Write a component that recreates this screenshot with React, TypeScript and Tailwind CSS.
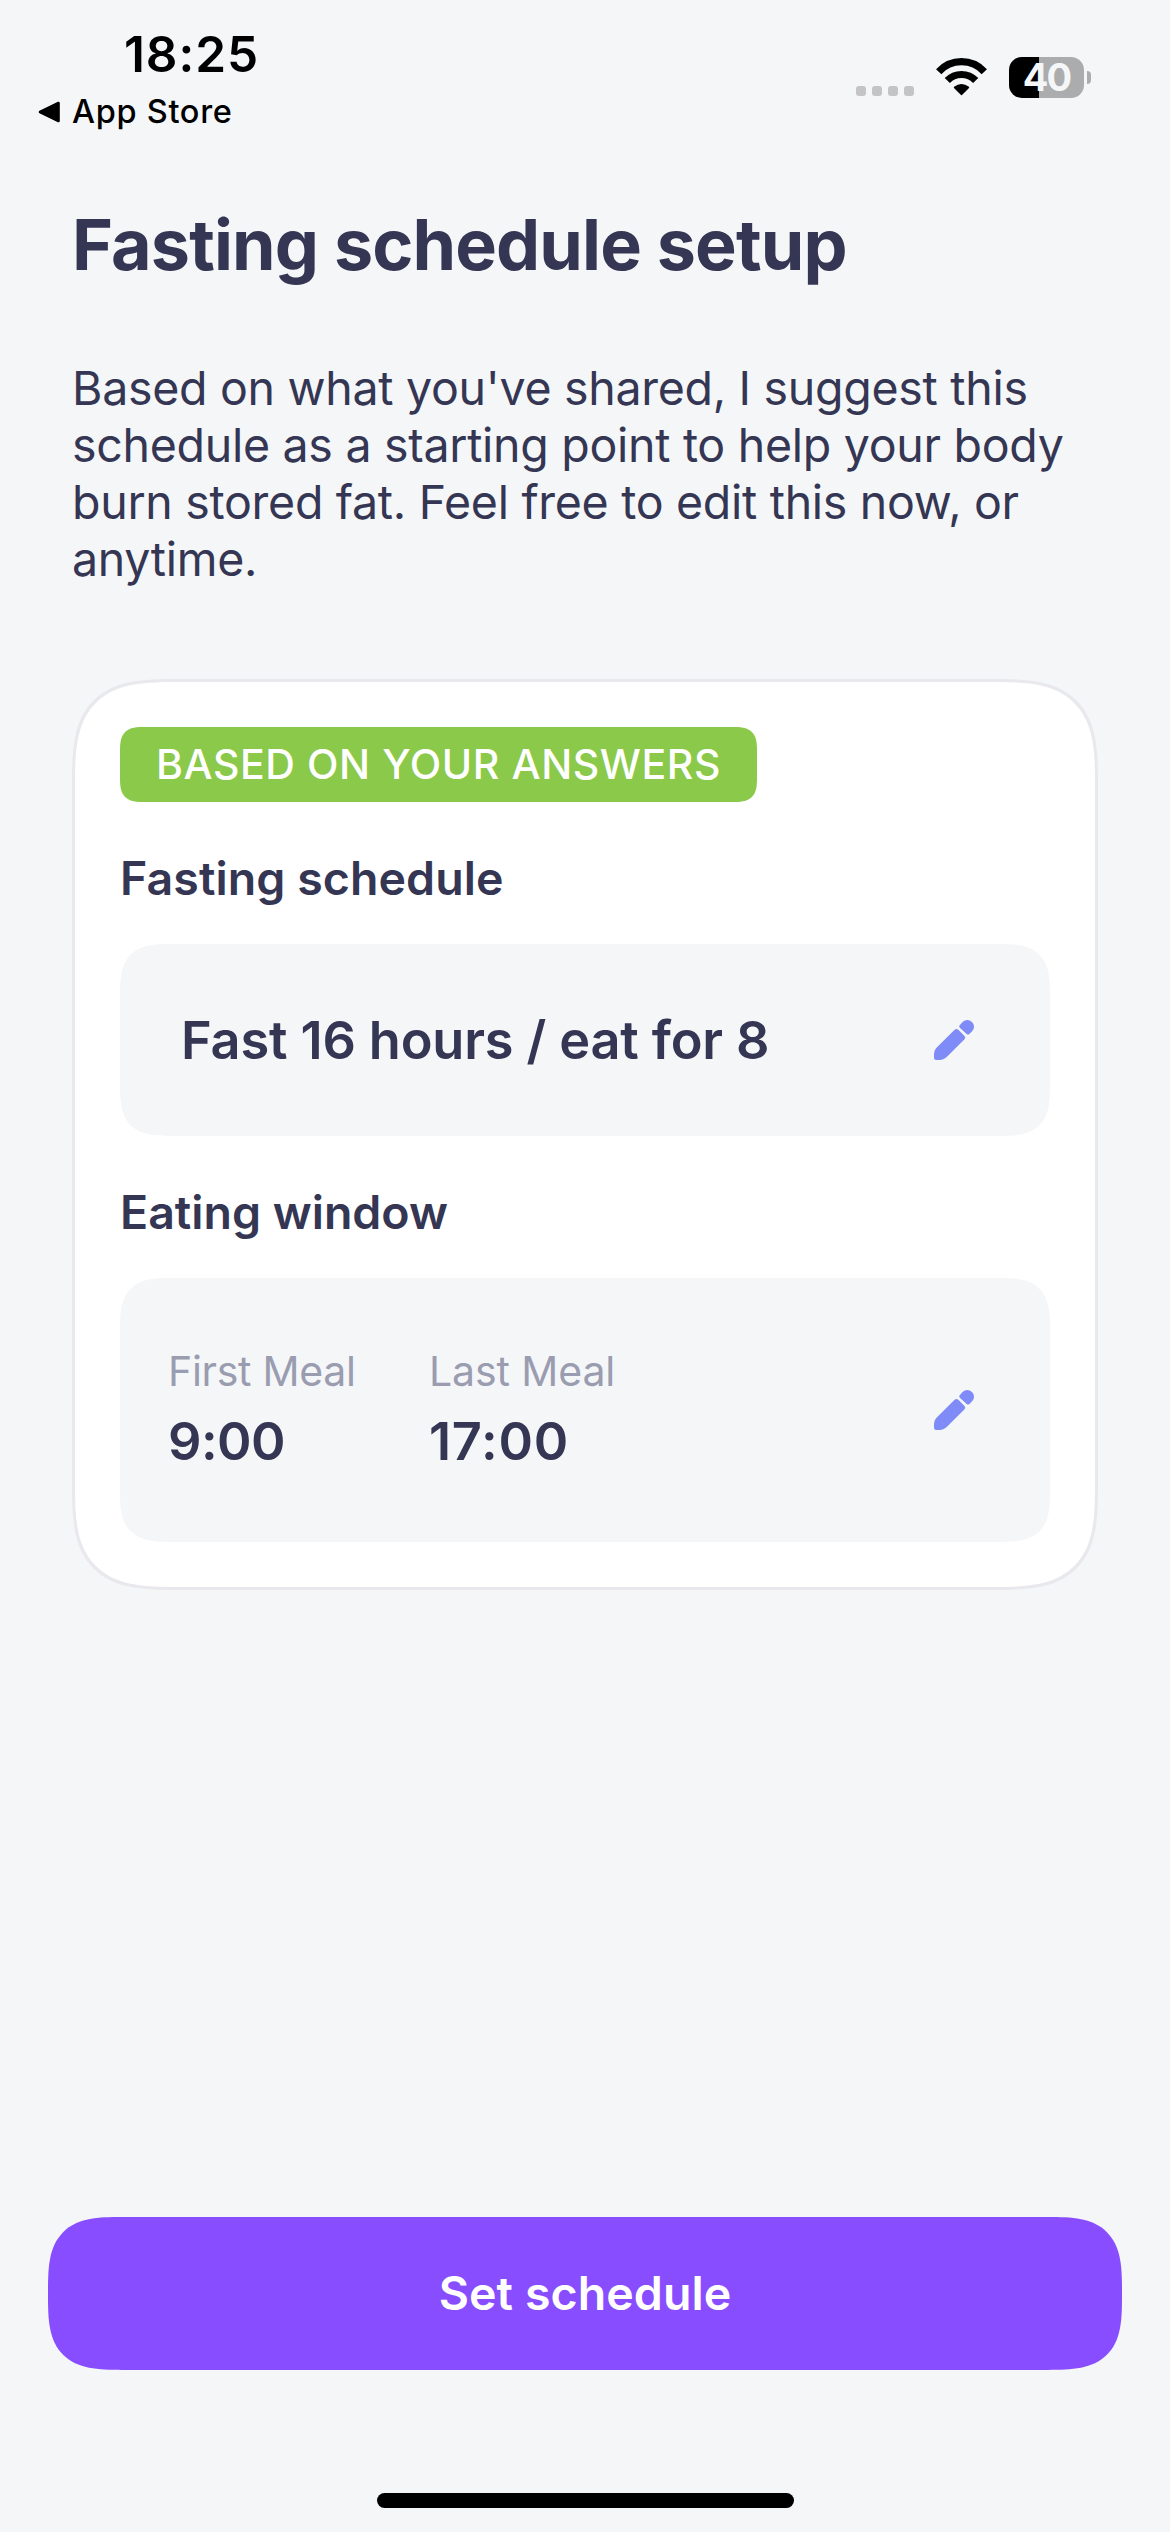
const meals = [
  { label: "First Meal", time: "9:00", width: "w-[261px]", labelSpacing: "tracking-[-0.28px]", timeSpacing: "tracking-[-0.54px]" },
  { label: "Last Meal", time: "17:00", width: "w-auto", labelSpacing: "tracking-[-0.1px]", timeSpacing: "tracking-[0.76px]" },
];

const WifiIcon = () => (
  <svg width="51" height="38" viewBox="0 0 51 38" fill="none">
    <path d="M2.7 13.7A31 31 0 0 1 48.3 13.7" stroke="#000" strokeWidth="7.2" />
    <path d="M11.3 22.6A19.6 19.6 0 0 1 39.7 22.6" stroke="#000" strokeWidth="7.2" />
    <path d="M18.5 29.4Q25.5 24 32.5 29.4L25.5 36.6Z" fill="#000" stroke="#000" strokeWidth="1.4" strokeLinejoin="round" />
  </svg>
);

const PencilIcon = () => (
  <svg width="40" height="40" viewBox="0 0 40 40" fill="#7f8cf8">
    <path d="M0 37.8V34.5C0 31.5 1 29.2 3 27.2L20.6 9.8Q22.5 8 24.3 9.8L30.3 15.8Q32.2 17.6 30.3 19.5L13.2 36.6C10.8 39 8.8 40 5.6 40H2.2Q0 40 0 37.8Z" />
    <path d="M25.8 7.7Q24.6 6.2 25.9 4.9L28.6 2.1C31.4 -0.7 35.2 -0.7 37.9 2.1C40.7 4.9 40.7 8.6 37.9 11.4L35.4 13.9Q34 15.2 32.6 14.1Z" />
  </svg>
);

const StatusBar = () => (
  <header className="flex h-[150px] justify-between text-black">
    <div className="flex flex-col pt-6">
      <span className="pl-[124px] text-[49.5px] leading-[60px] font-semibold tracking-[0.94px]">18:25</span>
      <div className="mt-2 flex h-10 items-center pl-[38px]">
        <svg width="22" height="22" viewBox="0 0 22 22">
          <path d="M2 11L20.5 2V20Z" fill="#000" stroke="#000" strokeWidth="2.6" strokeLinejoin="round" />
        </svg>
        <span className="ml-3 text-[32.5px] leading-10 font-medium tracking-[0.7px]">App Store</span>
      </div>
    </div>

    <div className="flex items-start pr-[79px]">
      <div className="mt-[86px] flex gap-1.5">
        {[0, 1, 2, 3].map((dot) => (
          <span key={dot} className="size-2.5 rounded-[3px] bg-[#c4c4c6]" />
        ))}
      </div>
      <div className="mt-[58px] ml-[22px]">
        <WifiIcon />
      </div>
      <div className="mt-[57px] ml-[22px] flex items-center">
        <div className="flex h-[41px] w-[75px] items-center justify-center rounded-[13px] bg-linear-to-r from-black from-40% to-[#abacae] to-40%">
          <span className="text-[38px] leading-[41px] font-bold tracking-[-2px] text-[#f5f6f8]">40</span>
        </div>
        <div className="ml-[3px] h-[13px] w-[4px] rounded-r-full bg-[#abacae]" />
      </div>
    </div>
  </header>
);

const ScheduleCard = () => (
  <section className="mt-[91px] h-[911px] rounded-[105px] border-3 border-[#e9e9ed] bg-white p-[45px] [corner-shape:superellipse(1.6)]">
    <div className="flex h-[75px] w-[637px] items-center rounded-[25px] bg-[#8bc94a] pb-0.5 pl-9 [corner-shape:superellipse(1.6)]">
      <span className="text-[41px] leading-[48px] font-medium tracking-[0.59px] whitespace-nowrap text-white">
        BASED ON YOUR ANSWERS
      </span>
    </div>

    <h2 className="mt-[47px] text-[46.5px] leading-[58px] font-semibold tracking-[0.08px]">Fasting schedule</h2>
    <div className="mt-[37px] flex h-48 items-center justify-between rounded-[52px] bg-[#f5f6f8] pr-[76px] pl-[61px] [corner-shape:superellipse(1.6)]">
      <span className="text-[52.3px] leading-[64px] font-semibold tracking-[-0.14px]">Fast 16 hours / eat for 8</span>
      <PencilIcon />
    </div>

    <h2 className="mt-[47px] text-[46.5px] leading-[58px] font-semibold">Eating window</h2>
    <div className="mt-[37px] flex h-[264px] items-center justify-between rounded-[52px] bg-[#f5f6f8] pr-[76px] pl-12 [corner-shape:superellipse(1.6)]">
      <div className="flex pb-0.5">
        {meals.map((meal) => (
          <div key={meal.label} className={`flex flex-col ${meal.width}`}>
            <span className={`text-[41px] leading-[50px] text-[#9a9cb0] ${meal.labelSpacing}`}>{meal.label}</span>
            <span className={`mt-[13px] text-[52.3px] leading-[64px] font-semibold ${meal.timeSpacing}`}>{meal.time}</span>
          </div>
        ))}
      </div>
      <PencilIcon />
    </div>
  </section>
);

const App = () => {
  return (
    <div className="flex h-[2532px] w-[1170px] flex-col bg-[#f5f6f8] font-['Inter',sans-serif] text-[#343653]">
      <StatusBar />

      <main className="flex flex-col px-[72px] pt-[53px]">
        <h1 className="text-[70px] leading-[84px] font-bold tracking-[-0.86px]">Fasting schedule setup</h1>
        <p className="mt-[73px] text-[46.5px] leading-[57px] tracking-[-0.29px] whitespace-nowrap">
          Based on what you've shared, I suggest this
          <br />
          schedule as a starting point to help your body
          <br />
          burn stored fat. Feel free to edit this now, or
          <br />
          anytime.
        </p>
        <ScheduleCard />
      </main>

      <footer className="mt-auto flex flex-col items-center px-12 pb-6">
        <button className="h-[153px] w-full rounded-[74px] bg-[#884dff] pb-0.5 text-[46.5px] leading-[58px] font-semibold tracking-[0.08px] text-white [corner-shape:superellipse(1.6)]">
          Set schedule
        </button>
        <div className="mt-[123px] h-[15px] w-[417px] rounded-full bg-black" />
      </footer>
    </div>
  );
};

export default App;
